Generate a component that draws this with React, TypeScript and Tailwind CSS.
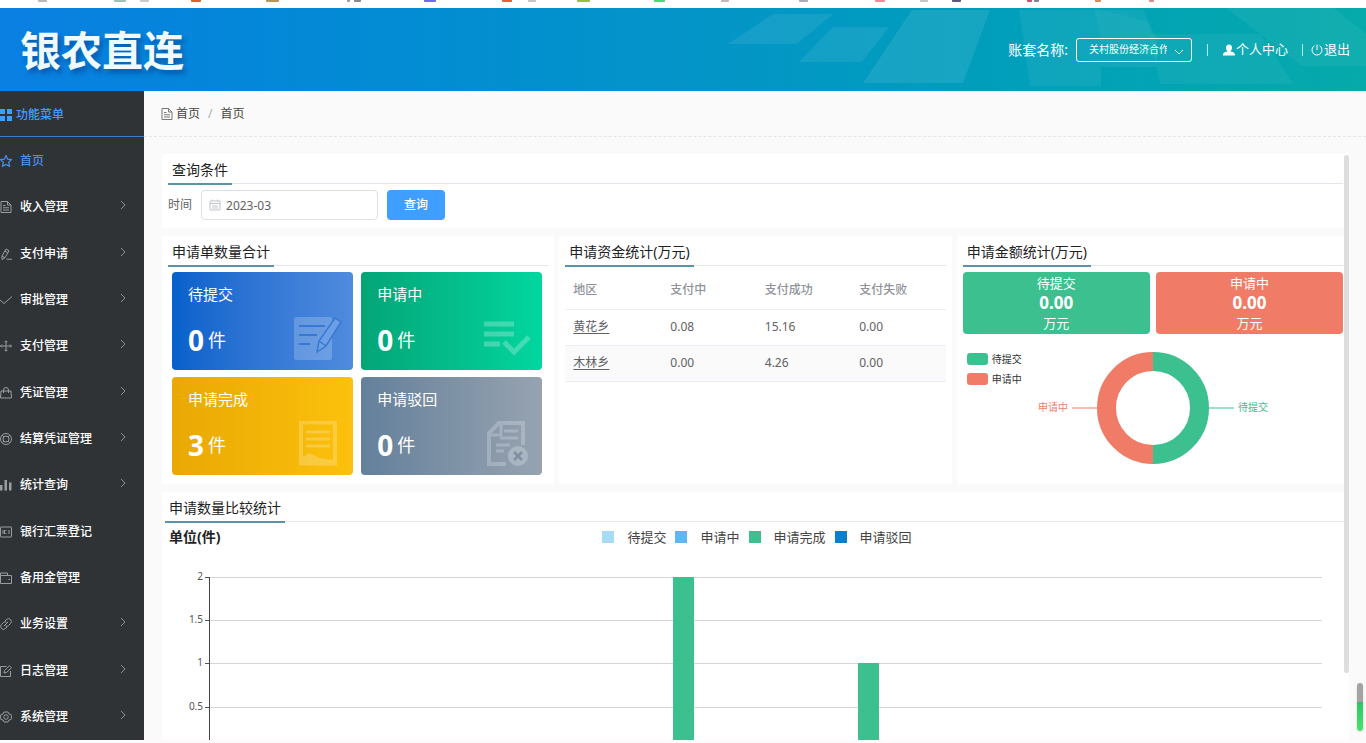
import type { ReactNode } from "react";

type IconProps = { children: ReactNode; className?: string };

function LineIcon({ children, className = "" }: IconProps) {
  return (
    <svg
      viewBox="0 0 24 24"
      className={`size-3 shrink-0 ${className}`}
      fill="none"
      stroke="currentColor"
      strokeWidth="2"
      aria-hidden="true"
    >
      {children}
    </svg>
  );
}

const docPaths = (
  <>
    <path d="M2 1h13l7 7v15H2z" />
    <path d="M15 1v7h7M6 9h5M6 13.500h12M6 18h12" />
  </>
);

type MenuItem = { label: string; icon: ReactNode; expandable?: boolean; active?: boolean };

const menu: MenuItem[] = [
  {
    label: "首页",
    active: true,
    icon: (
      <path
        d="M12 1l3.400 7.300 7.900.9-5.900 5.400 1.700 8L12 18.700l-7.100 3.900 1.700-8L.700 9.200l7.900-.9z"
        strokeWidth="2.400"
      />
    ),
  },
  { label: "收入管理", expandable: true, icon: docPaths },
  {
    label: "支付申请",
    expandable: true,
    icon: <path d="M12 2l6 3.500-8 14-6 3.500v-7zM9.500 6l6 3.500M4 16l6 3.500M13 22.500h11" />,
  },
  { label: "审批管理", expandable: true, icon: <path d="M0 12l8 7L24 5" /> },
  {
    label: "支付管理",
    expandable: true,
    icon: (
      <path d="M12 2v20M1 12h22M9 4.500L12 1.500l3 3M9 19.500l3 3 3-3M4 9l-3 3 3 3M20 9l3 3-3 3" />
    ),
  },
  {
    label: "凭证管理",
    expandable: true,
    icon: <path d="M2 8h20l1 14H1zM7 12V6a5 5 0 0 1 10 0v6" />,
  },
  {
    label: "结算凭证管理",
    expandable: true,
    icon: (
      <>
        <circle cx="12" cy="12" r="11" />
        <circle cx="12" cy="12" r="6" />
        <path d="M4.500 4.500L8 8M19.500 4.500L16 8M4.500 19.500L8 16M19.500 19.500L16 16" />
      </>
    ),
  },
  {
    label: "统计查询",
    expandable: true,
    icon: <path d="M0 12h5v11H0zM9 2h5v21H9zM18 7h5v16h-5z" fill="currentColor" stroke="none" />,
  },
  {
    label: "银行汇票登记",
    icon: (
      <>
        <rect x="1" y="2" width="22" height="20" rx="1" />
        <path d="M6 8v8M18 8v8M12 8v2M12 14v2M9 8v8" />
      </>
    ),
  },
  {
    label: "备用金管理",
    icon: <path d="M1 7h22v16H1zM1 7V2h14v5M17 15h3" />,
  },
  {
    label: "业务设置",
    expandable: true,
    icon: (
      <path d="M10 6l3-3a5.500 5.500 0 0 1 8 8l-4 4a5 5 0 0 1-6 1M14 18l-3 3a5.500 5.500 0 0 1-8-8l4-4a5 5 0 0 1 6-1M8 16l8-8" />
    ),
  },
  {
    label: "日志管理",
    expandable: true,
    icon: <path d="M13 3H1v20h20V12M8 16l1-5L19 1.500l4 4L13 15z" />,
  },
  {
    label: "系统管理",
    expandable: true,
    icon: (
      <>
        <path d="M8 2h8l2 4 4 1 1.500 5L22 17l-4 1-2 4H8l-2-4-4-1L.500 12 2 7l4-1z" />
        <circle cx="12" cy="12" r="4.500" />
      </>
    ),
  },
];

function BookmarkStrip() {
  const marks: [number, number, string][] = [
    [38, 9, "#b9b9b9"],
    [114, 12, "#9fc4b6"],
    [140, 9, "#c9c9c9"],
    [191, 10, "#d9622f"],
    [266, 13, "#b9935c"],
    [347, 3, "#9a9a9a"],
    [354, 7, "#8a8a8a"],
    [424, 12, "#6a70e0"],
    [502, 10, "#e0623a"],
    [528, 8, "#c4c4c4"],
    [577, 13, "#98c13c"],
    [654, 11, "#4fd67a"],
    [721, 8, "#c9b7b7"],
    [799, 9, "#b0a9b8"],
    [875, 10, "#ee8f95"],
    [920, 8, "#c4c4c4"],
    [952, 9, "#5a5a80"],
    [1027, 5, "#d0506a"],
    [1034, 5, "#8c7f9c"],
    [1095, 6, "#d58f5f"],
    [1149, 5, "#d88"],
  ];
  return (
    <div className="h-2 shrink-0 overflow-hidden bg-white">
      <svg width="1366" height="8" aria-hidden="true">
        {marks.map(([x, w, fill]) => (
          <rect key={x} x={x} y="-2" width={w} height="4" rx="1" fill={fill} />
        ))}
      </svg>
    </div>
  );
}

function Header() {
  return (
    <header className="relative flex h-[83px] shrink-0 items-center justify-between bg-linear-to-r from-[#0a7fe2] via-[#0494c8] to-[#06aaaa] pr-4 pl-5 text-white">
      <svg
        className="absolute inset-y-0 right-0 h-full"
        width="666"
        height="83"
        viewBox="700 8 666 83"
        fill="#fff"
        aria-hidden="true"
      >
        <path d="M728 44l45-30h60l-36 30z" opacity=".08" />
        <path d="M799 62l34-35h56l-27 35z" opacity=".08" />
        <path d="M863 83l49-73h78l-27 73z" opacity=".09" />
        <path d="M1019 10h124l14 30v27h-56v19h-71z" opacity=".06" />
        <path d="M1094 8l54 14 9 36-56-17z" opacity=".04" />
        <path d="M1150 34h110l34 50h-134z" opacity=".05" />
        <path d="M1226 8h108l32 26v32h-64z" opacity=".05" />
      </svg>
      <h1 className="relative pt-0.5 text-[41px] leading-none font-bold text-[#eefaff] [text-shadow:3px_4px_5px_rgba(0,40,110,0.45)]">
        银农直连
      </h1>
      <div className="relative flex items-center text-[13px]">
        <label htmlFor="account" className="text-sm">
          账套名称:
        </label>
        <span className="relative ml-2 flex items-center">
          <select
            id="account"
            className="h-6 w-[116px] appearance-none rounded-[3px] border border-white pr-6 pl-3 text-[10px] text-white"
          >
            <option>关村股份经济合作</option>
          </select>
          <svg
            className="pointer-events-none absolute right-2 mt-1 size-[10px]"
            viewBox="0 0 10 10"
            fill="none"
            stroke="#fff"
            aria-hidden="true"
          >
            <path d="M1 3l4 4 4-4" />
          </svg>
        </span>
        <span className="mx-[15px] h-3 w-px bg-white/70" />
        <a href="#profile" className="flex items-center gap-px">
          <svg className="size-3" viewBox="0 0 12 12" fill="#fff" aria-hidden="true">
            <path d="M6 .500C8 .500 9 2 9 3.700 9 5.300 8.300 6.500 7.500 7v.500c2 .4 4.200.8 4.500 3.500v.500H0V11c.3-2.700 2.500-3.100 4.500-3.500V7C3.700 6.500 3 5.300 3 3.700 3 2 4 .500 6 .500z" />
          </svg>
          个人中心
        </a>
        <span className="mr-2 ml-[14px] h-3 w-px bg-white/70" />
        <button type="button" className="flex items-center gap-px">
          <svg className="size-3" viewBox="0 0 12 12" fill="none" stroke="#fff" aria-hidden="true">
            <path d="M6 .500v5.500M3.500 1.700a5 5 0 1 0 5 0" />
          </svg>
          退出
        </button>
      </div>
    </header>
  );
}

function Sidebar() {
  return (
    <aside className="flex w-36 shrink-0 flex-col bg-[#303336] text-xs font-medium text-white">
      <div className="flex h-[46px] shrink-0 items-center gap-1 border-b border-[#3f7fc4] pt-0.5 text-[#409eff]">
        <svg className="size-3" viewBox="0 0 12 12" fill="#409eff" aria-hidden="true">
          <path d="M0 0h5v5H0zM7 0h5v5H7zM0 7h5v5H0zM7 7h5v5H7z" />
        </svg>
        功能菜单
      </div>
      <nav className="flex flex-1 flex-col pt-px">
        {menu.map((m) => (
          <a
            key={m.label}
            href="#menu"
            className={
              m.active
                ? "flex flex-1 items-center gap-2 pr-4 text-[#4a90ee]"
                : "flex flex-1 items-center gap-2 pr-4"
            }
          >
            <LineIcon className={m.active ? "" : "text-[#999da2]"}>{m.icon}</LineIcon>
            <span className="flex-1">{m.label}</span>
            {m.expandable && (
              <svg
                className="mb-1 size-[10px]"
                viewBox="0 0 10 10"
                fill="none"
                stroke="#8d9196"
                aria-hidden="true"
              >
                <path d="M3 1l4 4-4 4" />
              </svg>
            )}
          </a>
        ))}
      </nav>
    </aside>
  );
}

function PanelTitle({ children }: { children: ReactNode }) {
  return (
    <div className="flex h-[30px] border-b border-[#e4e7ed]">
      <h2 className="-mb-0.5 flex items-center border-b-2 border-[#5b94a8] px-1 pt-0.5 text-sm text-[#222]">
        {children}
      </h2>
    </div>
  );
}

const inkBlue = "#3878d2";

const countCards: { label: string; value: number; tone: string; icon: ReactNode }[] = [
  {
    label: "待提交",
    value: 0,
    tone: "from-[#0561cb] to-[#4f8bde]",
    icon: (
      <>
        <rect x="0" y="1" width="38" height="43" rx="2" fill="#fff" opacity=".2" />
        <path d="M5 10h26M5 19h18M5 28h11" stroke={inkBlue} strokeWidth="2" />
        <path d="M23 36l2-11L41 2l6 4-15 24z" fill="#6d9fe6" stroke={inkBlue} strokeWidth="1.500" />
        <path d="M25 25l7 5" stroke={inkBlue} strokeWidth="1.500" />
      </>
    ),
  },
  {
    label: "申请中",
    value: 0,
    tone: "from-[#04a577] to-[#02d69f]",
    icon: (
      <g stroke="#fff" strokeWidth="5" fill="none" opacity=".25">
        <path d="M1 8h30M1 18h30M1 28h16" />
        <path d="M21 26l10 10 15-15" />
      </g>
    ),
  },
  {
    label: "申请完成",
    value: 3,
    tone: "from-[#e9a804] to-[#fcc10c]",
    icon: (
      <g stroke="#fff" fill="none" opacity=".22">
        <path d="M7 1.500h34v41H7z" strokeWidth="4" />
        <path d="M12 11h24M12 18h24M12 25h24" strokeWidth="3" />
        <path d="M9 41V36l6-4 10 5 14 2v2z" fill="#fff" stroke="none" />
      </g>
    ),
  },
  {
    label: "申请驳回",
    value: 0,
    tone: "from-[#64809b] to-[#97a3b0]",
    icon: (
      <>
        <g stroke="#fff" fill="none" opacity=".22">
          <path d="M23 43H6V12L16 2h24v22" strokeWidth="4" />
          <path d="M6 14h12V2" strokeWidth="3" />
          <path d="M21 10h14M17 17h18M13 24h14M13 30h8" strokeWidth="3" />
        </g>
        <circle cx="35" cy="35" r="10" fill="#a9b5c1" />
        <path d="M31 31l8 8M39 31l-8 8" stroke="#7f90a2" strokeWidth="2.500" />
      </>
    ),
  },
];

function CountPanel() {
  return (
    <section className="bg-white px-1.5">
      <PanelTitle>申请单数量合计</PanelTitle>
      <div className="grid grid-cols-2 gap-x-2 gap-y-[7px] p-1.5 pl-1">
        {countCards.map((c) => (
          <div
            key={c.label}
            className={`flex h-[98px] flex-col justify-between rounded bg-linear-to-r pt-2.5 pr-[11px] pb-2 pl-4 text-white ${c.tone}`}
          >
            <span className="text-[15px] leading-6">{c.label}</span>
            <div className="flex items-end justify-between">
              <p className="flex items-center gap-1 text-lg leading-[44px]">
                <b className="text-[28px]">{c.value}</b>
                件
              </p>
              <svg width="48" height="46" viewBox="0 0 48 46" fill="none" aria-hidden="true">
                {c.icon}
              </svg>
            </div>
          </div>
        ))}
      </div>
    </section>
  );
}

const regions = [
  ["黄花乡", "0.08", "15.16", "0.00"],
  ["木林乡", "0.00", "4.26", "0.00"],
];

function FundsPanel() {
  return (
    <section className="bg-white px-1.5">
      <PanelTitle>申请资金统计(万元)</PanelTitle>
      <table className="w-full table-fixed text-left text-xs text-[#606266]">
        <thead>
          <tr className="h-[43px] border-b border-[#ebeef5] text-[#909399]">
            <th className="w-[97px] pt-1.5 pl-2 font-medium">地区</th>
            <th className="pt-1.5 pl-2 font-medium">支付中</th>
            <th className="pt-1.5 pl-2 font-medium">支付成功</th>
            <th className="pt-1.5 pl-2 font-medium">支付失败</th>
          </tr>
        </thead>
        <tbody>
          {regions.map(([name, ...values]) => (
            <tr key={name} className="h-9 border-b border-[#ebeef5] even:bg-[#fafafa]">
              <td className="pl-2">
                <a href="#region" className="underline underline-offset-2">
                  {name}
                </a>
              </td>
              {values.map((v, i) => (
                <td key={i} className="pl-2">
                  {v}
                </td>
              ))}
            </tr>
          ))}
        </tbody>
      </table>
    </section>
  );
}

function AmountPanel() {
  const tiles = [
    { label: "待提交", tone: "bg-[#3dc08f]" },
    { label: "申请中", tone: "bg-[#f07c67]" },
  ];
  return (
    <section className="bg-white px-1.5">
      <PanelTitle>申请金额统计(万元)</PanelTitle>
      <div className="grid grid-cols-2 gap-1.5 pt-1.5">
        {tiles.map((t) => (
          <div
            key={t.label}
            className={`flex h-[62px] flex-col items-center justify-center rounded text-[13px] leading-[18px] text-white ${t.tone}`}
          >
            <span>{t.label}</span>
            <b className="text-[17px] leading-[22px]">0.00</b>
            <span>万元</span>
          </div>
        ))}
      </div>
      <div className="grid grid-cols-[1fr_auto_1fr] pt-[17px]">
        <ul className="flex flex-col gap-1 pl-1 text-[10px] leading-4 text-[#333]">
          {tiles.map((t) => (
            <li key={t.label} className="flex items-center gap-1">
              <span className={`h-3 w-[21px] rounded-[3px] ${t.tone}`} />
              {t.label}
            </li>
          ))}
        </ul>
        <svg width="230" height="114" viewBox="0 0 230 114" fontSize="10" role="img">
          <g fill="none" strokeWidth="19">
            <path d="M115 10.500a46.500 46.500 0 0 1 0 93" stroke="#3dc08f" />
            <path d="M115 10.500a46.500 46.500 0 0 0 0 93" stroke="#f07c67" />
          </g>
          <path d="M34 57h25" stroke="#f07c67" />
          <path d="M171 57h25" stroke="#3dc08f" />
          <text x="0" y="60" fill="#f07c67">
            申请中
          </text>
          <text x="200" y="60" fill="#3dc08f">
            待提交
          </text>
        </svg>
      </div>
    </section>
  );
}

function ComparePanel() {
  const legend = [
    { label: "待提交", tone: "bg-[#a8dbf8]" },
    { label: "申请中", tone: "bg-[#5cb7f2]" },
    { label: "申请完成", tone: "bg-[#3dc08f]" },
    { label: "申请驳回", tone: "bg-[#0680cf]" },
  ];
  const ticks = [
    { label: "2", y: 8 },
    { label: "1.5", y: 51 },
    { label: "1", y: 94 },
    { label: "0.5", y: 138 },
  ];
  return (
    <section className="min-h-0 flex-1 overflow-hidden bg-white pl-[3px]">
      <PanelTitle>申请数量比较统计</PanelTitle>
      <div className="grid grid-cols-[1fr_auto_1fr] items-center pt-[3px] text-[13px] leading-6 text-[#444]">
        <h3 className="pl-1 text-sm leading-6 font-bold text-[#222]">单位(件)</h3>
        <ul className="flex gap-[9px]">
          {legend.map((l) => (
            <li key={l.label} className="flex items-center gap-[13px]">
              <span className={`size-3 ${l.tone}`} />
              {l.label}
            </li>
          ))}
        </ul>
      </div>
      <div className="flex pt-5 pr-[27px]">
        <svg width="44" height="150" fontSize="10" fill="#555" aria-hidden="true">
          {ticks.map((t) => (
            <text key={t.label} x="38" y={t.y + 3} textAnchor="end">
              {t.label}
            </text>
          ))}
        </svg>
        <svg
          className="h-[190px] min-w-0 flex-1 overflow-visible"
          shapeRendering="crispEdges"
          role="img"
        >
          {ticks.map((t) => (
            <g key={t.label}>
              <rect x="0" y={t.y} width="100%" height="1" fill="#d5d5d5" />
              <rect x="-4" y={t.y} width="4" height="1" fill="#555" />
            </g>
          ))}
          <rect x="0" y="8" width="1" height="173" fill="#444" />
          <rect x="41.67%" y="8" width="21" height="173" fill="#3dc08f" />
          <rect x="58.33%" y="94" width="21" height="87" fill="#3dc08f" />
        </svg>
      </div>
    </section>
  );
}

export default function App() {
  return (
    <div className="flex h-screen flex-col overflow-hidden bg-[#fcfafa] pb-[3px] font-['Noto_Sans','Noto_Sans_CJK_SC',sans-serif]">
      <BookmarkStrip />
      <Header />
      <div className="flex min-h-0 flex-1">
        <Sidebar />
        <main className="flex min-w-0 flex-1 flex-col bg-[#fafafa]">
          <nav className="flex h-[46px] shrink-0 items-center border-b border-dashed border-[#e6e6e6] pl-[17px] text-xs text-[#444]">
            <LineIcon className="mr-[3px] text-[#777]">{docPaths}</LineIcon>
            <a href="#home">首页</a>
            <span className="mx-2 text-[#aaa]">/</span>
            <span>首页</span>
          </nav>
          <div className="relative mt-[17px] mr-[17px] ml-[18px] flex min-h-0 flex-1 flex-col gap-2">
            <section className="shrink-0 bg-white px-1.5 pb-2">
              <PanelTitle>查询条件</PanelTitle>
              <form className="flex items-center gap-[9px] pt-1.5 text-xs text-[#606266]">
                <label htmlFor="month">时间</label>
                <span className="relative flex items-center">
                  <svg
                    className="absolute left-2 size-3"
                    viewBox="0 0 12 12"
                    fill="none"
                    stroke="#c0c4cc"
                    aria-hidden="true"
                  >
                    <path d="M1 2h10v9H1zM1 4.500h10M3.500.500V2M8.500.500V2M3 7h6M3 9h6" />
                  </svg>
                  <input
                    id="month"
                    defaultValue="2023-03"
                    className="h-[30px] w-[177px] rounded border border-[#dcdfe6] pr-2 pl-6"
                  />
                </span>
                <button
                  type="button"
                  className="h-[30px] w-[58px] rounded bg-[#409eff] font-medium text-white"
                >
                  查询
                </button>
              </form>
            </section>
            <div className="grid h-[248px] shrink-0 grid-cols-3 gap-[5px]">
              <CountPanel />
              <FundsPanel />
              <AmountPanel />
            </div>
            <ComparePanel />
            <div className="absolute top-px right-0 h-[518px] w-[5px] rounded-full bg-[#dddee0]" />
          </div>
        </main>
      </div>
      <div className="absolute right-[3px] bottom-3 h-12 w-1.5 rounded-full bg-linear-to-b from-[#a3a3a3] from-40% via-[#2cc566] via-40% to-[#4be36c] shadow" />
    </div>
  );
}
